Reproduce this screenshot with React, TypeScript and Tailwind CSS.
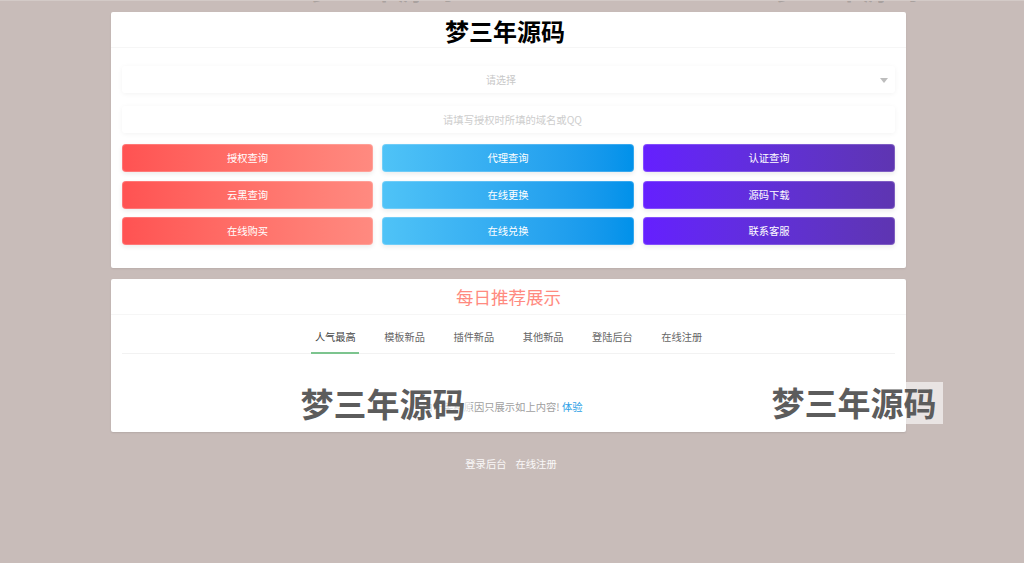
const font = { fontFamily: '"Noto Sans CJK SC", sans-serif' };

const rows = [
  ["授权查询", "代理查询", "认证查询"],
  ["云黑查询", "在线更换", "源码下载"],
  ["在线购买", "在线兑换", "联系客服"],
];
const colors = [
  "from-[#ff5252] to-[#ff8a80]",
  "from-[#4fc3f7] to-[#0091ea]",
  "from-[#651fff] to-[#5e35b1]",
];
const tabs = ["人气最高", "模板新品", "插件新品", "其他新品", "登陆后台", "在线注册"];

function Mark({ className, text }: { className: string; text: string }) {
  return (
    <div className={`absolute flex items-center justify-center whitespace-nowrap font-bold ${className}`}>
      {text}
    </div>
  );
}

export default function App() {
  return (
    <div style={font} className="relative h-[563px] overflow-hidden border-t border-[#d3cac7] bg-[#c8bcb9] pt-[11px]">
      <div className="ml-[111px] w-[795px]">
        <div className="h-[256px] rounded-[2px] bg-white shadow-[0_1px_2px_rgba(0,0,0,0.08)]">
          <div className="flex h-[36px] items-center justify-center border-b border-[#f6f6f6] pr-[7px] pt-[3px] text-[24px] font-bold leading-none text-black">
            梦三年源码
          </div>
          <div className="px-[11px] pt-[18px]">
            <div className="relative flex h-[27px] items-center justify-center rounded-[3px] bg-white pr-[15px] text-[10px] text-[#c8c8c8] shadow-[0_1px_5px_rgba(0,0,0,0.05)]">
              请选择
              <span className="absolute right-[7px] top-[12px] h-0 w-0 border-x-[4.5px] border-t-[5px] border-x-transparent border-t-[#bdbdbd]" />
            </div>
            <div className="mt-[13px] flex h-[27px] items-center justify-center rounded-[3px] bg-white pl-[8px] text-[10.3px] text-[#cdcdcd] shadow-[0_1px_5px_rgba(0,0,0,0.05)]">
              请填写授权时所填的域名或QQ
            </div>
            <div className="mt-[11px] grid grid-cols-[251px_252px_252px] gap-x-[9px] gap-y-[8.5px]">
              {rows.flatMap((row) =>
                row.map((label, i) => (
                  <div
                    key={label}
                    className={`flex h-[28px] items-center justify-center rounded-[4px] border border-white/20 bg-gradient-to-r bg-origin-border text-[10.3px] text-white shadow-[0_2px_5px_rgba(0,0,0,0.08)] ${colors[i]}`}
                  >
                    {label}
                  </div>
                ))
              )}
            </div>
          </div>
        </div>

        <div className="mt-[11px] h-[153px] rounded-[2px] bg-white shadow-[0_1px_2px_rgba(0,0,0,0.1)]">
          <div className="flex h-[36px] items-center justify-center border-b border-[#f6f6f6] text-[17.5px] leading-none text-[#ff8a80]">
            每日推荐展示
          </div>
          <div className="mx-[11px] flex h-[39px] justify-center gap-[21.3px] border-b border-[#f2f2f2]">
            {tabs.map((t, i) => (
              <div
                key={t}
                className={`-mb-px flex w-[48px] items-center justify-center whitespace-nowrap border-b-2 pt-[7px] text-[10.2px] ${
                  i === 0 ? "border-[#7cc48e] text-[#444]" : "border-transparent text-[#666]"
                }`}
              >
                {t}
              </div>
            ))}
          </div>
          <div className="pr-[12px] pt-[46px] text-center text-[10.3px] leading-[14px] text-[#a0a0a0]">
            <span>由于某种原因只展示如上内容! </span>
            <span className="text-[#2d9fe6]">体验</span>
          </div>
        </div>

        <div className="mt-[25px] flex justify-center gap-[9px] pl-[5px] text-[10.3px] leading-[14px] text-white/90">
          <span>登录后台</span>
          <span>在线注册</span>
        </div>
      </div>

      <Mark className="left-[295px] top-[381px] h-[43px] w-[176px] bg-white/60 text-[33px] text-[#5c5c5c]" text="梦三年源码" />
      <Mark className="left-[765px] top-[381px] h-[42px] w-[178px] bg-white/60 text-[33px] text-[#5c5c5c]" text="梦三年源码" />
      <Mark className="left-[300px] top-[-33px] h-[40px] w-[165px] text-[29px] text-[#5c5c5c]/30" text="梦三年源码" />
      <Mark className="left-[765px] top-[-33px] h-[40px] w-[165px] text-[29px] text-[#5c5c5c]/30" text="梦三年源码" />
    </div>
  );
}
